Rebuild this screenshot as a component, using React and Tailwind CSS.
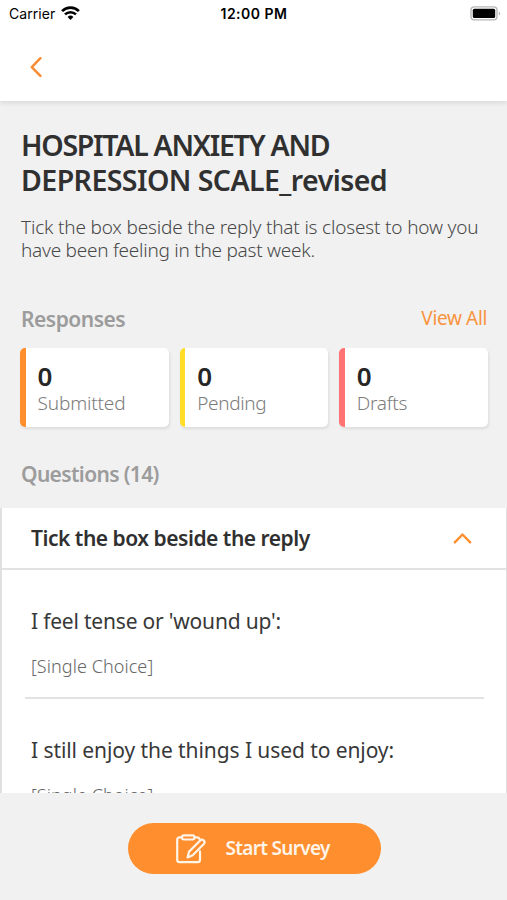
import { useState } from 'react';

const stats = [
  { label: 'Submitted', count: 0, accent: 'bg-[#ff8f2e]', tracking: 'tracking-[-0.15px]' },
  { label: 'Pending', count: 0, accent: 'bg-[#ffdd29]', tracking: 'tracking-[-0.35px]' },
  { label: 'Drafts', count: 0, accent: 'bg-[#ff7373]', tracking: 'tracking-[-0.3px]' },
];

const questions = [
  { text: "I feel tense or 'wound up':", type: 'Single Choice', tracking: 'tracking-[-0.2px]' },
  { text: 'I still enjoy the things I used to enjoy:', type: 'Single Choice', tracking: 'tracking-[-0.08px]' },
];

function WifiIcon() {
  return (
    <svg width="19" height="15" viewBox="0 0 19 15" fill="none" stroke="#000">
      <path d="M1.1 5.1a12 12 0 0 1 16.8 0" strokeWidth="2.7" />
      <path d="M4 8.4a7.8 7.8 0 0 1 11 0" strokeWidth="2.5" />
      <path d="M6.6 11a4.1 4.1 0 0 1 5.8 0L9.5 14z" fill="#000" stroke="none" />
    </svg>
  );
}

function BatteryIcon() {
  return (
    <svg width="31" height="15" viewBox="0 0 31 15" fill="none">
      <rect x="1" y="0.9" width="26" height="13" rx="3.4" stroke="#b5b5b5" strokeWidth="1.4" />
      <rect x="2.8" y="2.7" width="22.4" height="9.4" rx="1.6" fill="#000" />
      <path d="M28.8 5.4c1.9.8 1.9 3.4 0 4.2z" fill="#b5b5b5" />
    </svg>
  );
}

function SurveyIcon() {
  return (
    <svg
      width="32"
      height="30"
      viewBox="0 0 32 30"
      fill="none"
      stroke="#fff4e8"
      strokeWidth="2.2"
      strokeLinejoin="round"
      strokeLinecap="round"
    >
      <path d="M7 3.4H4.6C3 3.4 2.200 4.200 2.200 5.800v20c0 1.600.8 2.400 2.400 2.400h18c1.600 0 2.400-.8 2.400-2.400v-8.500" />
      <path d="M19.500 3.400h2.700c1.300 0 2.200.6 2.500 1.700" />
      <rect x="7" y="1.300" width="12.500" height="4.200" rx="1.900" />
      <path d="M12.600 23.400l1.500-5.800L25.200 6.500c1.100-1 2.600-1 3.600 0s1 2.400 0 3.500L17.700 21.200z" />
    </svg>
  );
}

function StatCard({ label, count, accent, tracking }) {
  return (
    <div className="flex h-[79px] flex-1 overflow-hidden rounded-[5px] bg-white shadow-[1px_2px_3px_rgba(0,0,0,0.09)]">
      <div className={`w-[5.5px] shrink-0 ${accent}`} />
      <div className="pl-[12px] pt-[14px]">
        <p className="text-[26px] leading-[28px] font-semibold text-[#262626]">{count}</p>
        <p className={`text-[19px] leading-[26px] font-light text-[#7c7c7c] ${tracking}`}>{label}</p>
      </div>
    </div>
  );
}

export default function App() {
  const [open, setOpen] = useState(true);

  return (
    <div className="flex h-[900px] w-[507px] flex-col overflow-hidden bg-[#f1f1f1] font-['Noto_Sans',sans-serif] text-[#303030]">
      {/* HEADER */}
      <header className="relative z-10 h-[101px] shrink-0 bg-white shadow-[0_2px_5px_rgba(0,0,0,0.1)]">
        <div className="grid h-[27px] grid-cols-3 items-center pl-[9px] pr-[6px] font-['Inter',sans-serif] text-[14px] text-black">
          <div className="flex items-center gap-[6px]">
            <span className="tracking-[0.05px]">Carrier</span>
            <WifiIcon />
          </div>
          <span className="-ml-[2px] text-center font-semibold tracking-[0.5px]">12:00 PM</span>
          <div className="flex justify-end">
            <BatteryIcon />
          </div>
        </div>
        <button className="ml-[30px] mt-[30px] block">
          <svg width="12" height="20" viewBox="0 0 12 20" fill="none" stroke="#f98b32" strokeWidth="2.4" strokeLinecap="round" strokeLinejoin="round">
            <path d="M10.400 1.200L1.800 10.100l8.600 8.800" />
          </svg>
        </button>
      </header>

      <main className="min-h-0 flex-1 overflow-hidden">
        <div className="px-[21px] pt-[27px]">
          <h1 className="text-[28.5px] leading-[35px] font-semibold">
            <span className="block whitespace-nowrap tracking-[-1.28px]">HOSPITAL ANXIETY AND</span>
            <span className="block whitespace-nowrap tracking-[-0.56px]">DEPRESSION SCALE_revised</span>
          </h1>
          <p className="mt-[18px] text-[19px] leading-[23px] font-light text-[#484848]">
            <span className="block whitespace-nowrap tracking-[-0.18px]">
              Tick the box beside the reply that is closest to how you
            </span>
            <span className="block whitespace-nowrap tracking-[-0.25px]">have been feeling in the past week.</span>
          </p>
        </div>

        {/* RESPONSES */}
        <div className="mt-[43px] flex items-center justify-between pl-[21px] pr-5">
          <h2 className="text-[21px] leading-[28px] font-semibold tracking-[-0.5px] text-[#9c9c9c]">Responses</h2>
          <button className="-mt-[3px] text-[19px] leading-[26px] tracking-[-0.35px] text-[#f9943e]">View All</button>
        </div>
        <div className="mt-[15px] flex gap-[11px] pl-5 pr-[19px]">
          {stats.map((s) => (
            <StatCard key={s.label} {...s} />
          ))}
        </div>

        {/* QUESTIONS */}
        <h2 className="mt-[33px] pl-[21px] text-[21px] leading-[28px] font-semibold tracking-[-0.65px] text-[#9c9c9c]">
          Questions (14)
        </h2>
        <section className="mt-[20px] border-x-2 border-[#e0e0e0] border-r-[1px] bg-white">
          <button
            onClick={() => setOpen(!open)}
            className="flex h-[62px] w-full items-center justify-between border-b-2 border-[#e2e2e2] pl-[29px] pr-[34px]"
          >
            <span className="pt-[2px] whitespace-nowrap text-[21px] font-semibold tracking-[-0.48px]">
              Tick the box beside the reply
            </span>
            <svg width="19" height="12" viewBox="0 0 19 12" fill="none" stroke="#ff8f2e" strokeWidth="2.4" strokeLinecap="round" strokeLinejoin="round">
              <path d="M1.800 10.300L9.500 2.500l7.700 7.800" />
            </svg>
          </button>
          {open &&
            questions.map((q) => (
              <div key={q.text} className="ml-[23px] mr-[22px] h-[129px] border-b-2 border-[#e2e2e2] pl-[6px] pt-[37px]">
                <p className={`whitespace-nowrap text-[21px] leading-[28px] text-[#383838] ${q.tracking}`}>{q.text}</p>
                <p className="mt-[18px] text-[18px] leading-[26px] font-light tracking-[0.07px] text-[#666]">[{q.type}]</p>
              </div>
            ))}
        </section>
      </main>

      {/* START BUTTON */}
      <footer className="flex h-[107px] shrink-0 justify-center bg-[#f1f1f1] pt-[30px] pl-px">
        <button className="flex h-[51px] w-[253px] items-center rounded-full bg-[#ff8f2e] pl-[47px] text-[#fff4e8]">
          <SurveyIcon />
          <span className="ml-[19px] whitespace-nowrap text-[19px] font-semibold tracking-[-0.7px]">Start Survey</span>
        </button>
      </footer>
    </div>
  );
}
